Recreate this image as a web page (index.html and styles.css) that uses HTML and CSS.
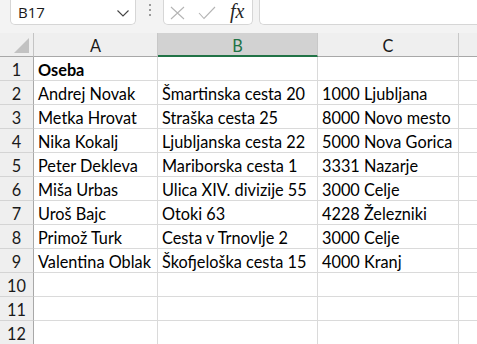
FILE: index.html
```html
<!DOCTYPE html>
<html lang="sl">
<head>
<meta charset="utf-8">
<title>Oseba</title>
<link rel="stylesheet" href="styles.css">
</head>
<body>
<div class="toolbar">
  <div class="namebox">
    <span class="ref">B17</span>
    <svg class="chev" width="12" height="7" viewBox="0 0 12 7"><path d="M0.5 0.5 L6 6 L11.5 0.5" fill="none" stroke="#444" stroke-width="1.1"/></svg>
  </div>
  <div class="grip"><i></i><i></i><i></i></div>
  <div class="fxbox">
    <svg class="ico" width="15" height="14" viewBox="0 0 15 14"><path d="M1 1 L14 13 M14 1 L1 13" stroke="#b4b4b4" stroke-width="1.1" fill="none"/></svg>
    <svg class="ico" width="18" height="14" viewBox="0 0 18 14"><path d="M1 7 L6 12.5 L17 1" stroke="#b4b4b4" stroke-width="1.1" fill="none"/></svg>
    <span class="fx">fx</span>
  </div>
  <div class="formula"></div>
</div>
<div class="sheet">
  <div class="corner"><svg width="17" height="17" viewBox="0 0 17 17"><path d="M16 1 L16 16 L1 16 Z" fill="#c2c2c2"/></svg></div>
  <div class="colhead">A</div>
  <div class="colhead sel">B</div>
  <div class="colhead">C</div>
  <div class="colhead last"></div>

  <div class="rowhead">1</div><div class="cell bold">Oseba</div><div class="cell"></div><div class="cell"></div><div class="cell last"></div>
  <div class="rowhead">2</div><div class="cell">Andrej Novak</div><div class="cell">Šmartinska cesta 20</div><div class="cell">1000 Ljubljana</div><div class="cell last"></div>
  <div class="rowhead">3</div><div class="cell">Metka Hrovat</div><div class="cell">Straška cesta 25</div><div class="cell">8000 Novo mesto</div><div class="cell last"></div>
  <div class="rowhead">4</div><div class="cell">Nika Kokalj</div><div class="cell">Ljubljanska cesta 22</div><div class="cell">5000 Nova Gorica</div><div class="cell last"></div>
  <div class="rowhead">5</div><div class="cell">Peter Dekleva</div><div class="cell">Mariborska cesta 1</div><div class="cell">3331 Nazarje</div><div class="cell last"></div>
  <div class="rowhead">6</div><div class="cell">Miša Urbas</div><div class="cell">Ulica XIV. divizije 55</div><div class="cell">3000 Celje</div><div class="cell last"></div>
  <div class="rowhead">7</div><div class="cell">Uroš Bajc</div><div class="cell">Otoki 63</div><div class="cell">4228 Železniki</div><div class="cell last"></div>
  <div class="rowhead">8</div><div class="cell">Primož Turk</div><div class="cell">Cesta v Trnovlje 2</div><div class="cell">3000 Celje</div><div class="cell last"></div>
  <div class="rowhead">9</div><div class="cell">Valentina Oblak</div><div class="cell">Škofjeloška cesta 15</div><div class="cell">4000 Kranj</div><div class="cell last"></div>
  <div class="rowhead">10</div><div class="cell"></div><div class="cell"></div><div class="cell"></div><div class="cell last"></div>
  <div class="rowhead">11</div><div class="cell"></div><div class="cell"></div><div class="cell"></div><div class="cell last"></div>
  <div class="rowhead">12</div><div class="cell"></div><div class="cell"></div><div class="cell"></div><div class="cell last"></div>
</div>
</body>
</html>
```
FILE: styles.css
```css
* { box-sizing: border-box; }
html, body { margin: 0; padding: 0; }
body {
  width: 477px;
  height: 344px;
  overflow: hidden;
  background: #ffffff;
  font-family: Lato, "Liberation Sans", sans-serif;
  color: #000;
}
.toolbar {
  height: 33px;
  background: #f3f3f3;
  display: flex;
  align-items: flex-start;
  padding-left: 10px;
}
.namebox {
  width: 126px;
  height: 25px;
  background: #fff;
  border: 1px solid #d6d6d6;
  border-top: none;
  border-radius: 0 0 5px 5px;
  display: flex;
  align-items: center;
  justify-content: space-between;
  padding: 0 6px 0 7px;
  font-family: "Open Sans", "Noto Sans", sans-serif;
  font-size: 15px;
  color: #1a1a1a;
}
.chev { margin-top: 2px; }
.grip {
  width: 27px;
  display: flex;
  flex-direction: column;
  align-items: center;
  gap: 3px;
  padding-top: 4px;
}
.grip i {
  display: block;
  width: 2px;
  height: 2px;
  background: #9a9a9a;
}
.fxbox {
  width: 90px;
  height: 25px;
  background: #fff;
  border: 1px solid #d6d6d6;
  border-top: none;
  border-radius: 0 0 5px 5px;
  display: flex;
  align-items: center;
  padding-left: 6px;
}
.fxbox .ico:first-child { margin-right: 13px; margin-top: 1px; }
.fxbox .ico:nth-child(2) { margin-right: 14px; margin-top: 1px; }
.fx {
  font-family: "Liberation Serif", "DejaVu Serif", serif;
  font-style: italic;
  font-size: 20px;
  color: #262626;
  line-height: 1;
  margin-top: -2px;
}
.formula {
  flex: 1;
  height: 25px;
  margin-left: 6px;
  background: #fff;
  border: 1px solid #d6d6d6;
  border-top: none;
  border-right: none;
  border-radius: 0 0 0 5px;
}
.sheet {
  display: grid;
  grid-template-columns: 34px 124px 160px 141px 1fr;
  grid-auto-rows: 24px;
  font-size: 16.3px;
  line-height: 23px;
}
.sheet > div {
  border-right: 1px solid #dadada;
  border-bottom: 1px solid #dadada;
  white-space: nowrap;
  padding-top: 1px;
}
.sheet > .last { border-right: none; }
.corner {
  background: #efefef;
  display: flex;
  align-items: flex-end;
  justify-content: flex-end;
  padding: 0 3px 2px 0;
  border-right-color: #c4c4c4 !important;
  border-bottom-color: #a8a8a8 !important;
}
.corner svg { display: block; }
.colhead {
  background: #efefef;
  text-align: center;
  border-right-color: #c8c8c8 !important;
  border-bottom-color: #a8a8a8 !important;
  color: #1a1a1a;
}
.colhead.sel {
  background: #d2d2d2;
  color: #217346;
  border-bottom: 2px solid #217346 !important;
}
.rowhead {
  background: #efefef;
  text-align: center;
  border-right-color: #a8a8a8 !important;
  border-bottom-color: #d4d4d4 !important;
  color: #1a1a1a;
  font-size: 16.3px;
}
.cell { padding-left: 4px; }
.bold { font-weight: bold; }
```
